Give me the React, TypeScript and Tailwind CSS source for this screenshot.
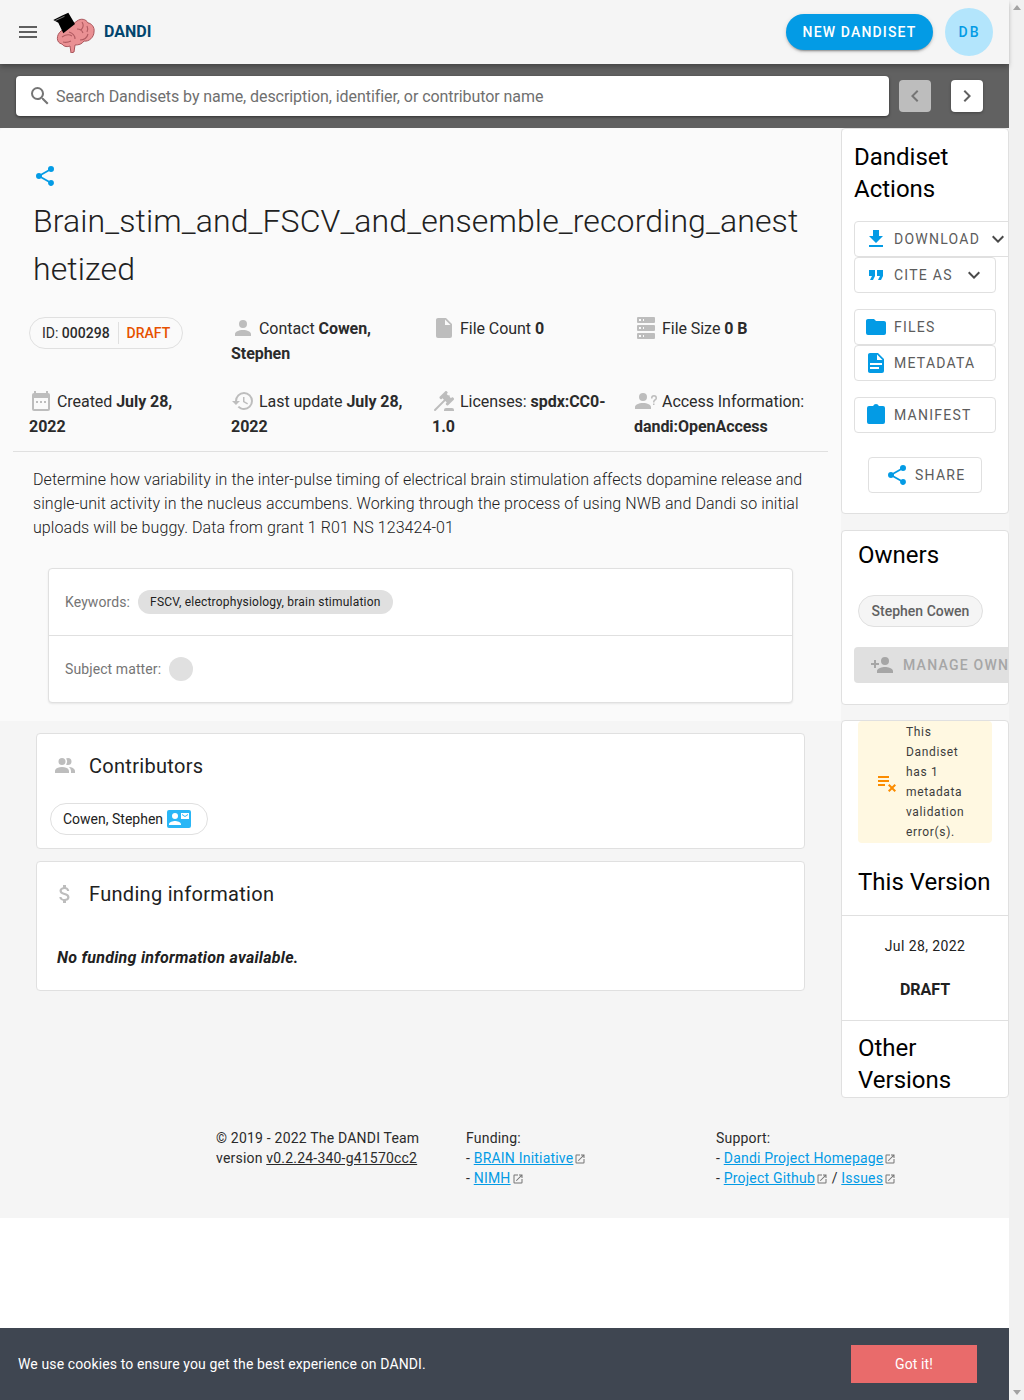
import type { ReactNode } from "react";

const mdi = {
  menu: "M3,6H21V8H3V6M3,11H21V13H3V11M3,16H21V18H3V16Z",
  magnify: "M9.5,3A6.5,6.5 0 0,1 16,9.5C16,11.11 15.41,12.59 14.44,13.73L14.71,14H15.5L20.5,19L19,20.5L14,15.5V14.71L13.73,14.44C12.59,15.41 11.11,16 9.5,16A6.5,6.5 0 0,1 3,9.5A6.5,6.5 0 0,1 9.5,3M9.5,5C7,5 5,7 5,9.5C5,12 7,14 9.5,14C12,14 14,12 14,9.5C14,7 12,5 9.5,5Z",
  share: "M18,16.08C17.24,16.08 16.56,16.38 16.04,16.85L8.91,12.7C8.96,12.47 9,12.24 9,12C9,11.76 8.96,11.53 8.91,11.3L15.96,7.19C16.5,7.69 17.21,8 18,8A3,3 0 0,0 21,5A3,3 0 0,0 18,2A3,3 0 0,0 15,5C15,5.24 15.04,5.47 15.09,5.7L8.04,9.81C7.5,9.31 6.79,9 6,9A3,3 0 0,0 3,12A3,3 0 0,0 6,15C6.79,15 7.5,14.69 8.04,14.19L15.16,18.34C15.11,18.55 15.08,18.77 15.08,19C15.08,20.61 16.39,21.91 18,21.91C19.61,21.91 20.92,20.61 20.92,19A2.92,2.92 0 0,0 18,16.08Z",
  account: "M12,4A4,4 0 0,1 16,8A4,4 0 0,1 12,12A4,4 0 0,1 8,8A4,4 0 0,1 12,4M12,14C16.42,14 20,15.79 20,18V20H4V18C4,15.79 7.58,14 12,14Z",
  file: "M13,9V3.5L18.5,9M6,2C4.89,2 4,2.89 4,4V20A2,2 0 0,0 6,22H18A2,2 0 0,0 20,20V8L14,2H6Z",
  download: "M5,20H19V18H5M19,9H15V3H9V9H5L12,16L19,9Z",
  chevronDown: "M7.41,8.58L12,13.17L16.59,8.58L18,10L12,16L6,10L7.41,8.58Z",
  chevronLeft: "M15.41,16.58L10.83,12L15.41,7.41L14,6L8,12L14,18L15.41,16.58Z",
  chevronRight: "M8.59,16.58L13.17,12L8.59,7.41L10,6L16,12L10,18L8.59,16.58Z",
  quote: "M14,17H17L19,13V7H13V13H16M6,17H9L11,13V7H5V13H8L6,17Z",
  folder: "M10,4H4C2.89,4 2,4.89 2,6V18A2,2 0 0,0 4,20H20A2,2 0 0,0 22,18V8C22,6.89 21.1,6 20,6H12L10,4Z",
  fileDoc: "M13,9H18.5L13,3.5V9M6,2H14L20,8V20A2,2 0 0,1 18,22H6C4.89,22 4,21.1 4,20V4C4,2.89 4.89,2 6,2M15,18V16H6V18H15M18,14V12H6V14H18Z",
  clipboard: "M19,3H14.82C14.4,1.84 13.3,1 12,1C10.7,1 9.6,1.84 9.18,3H5A2,2 0 0,0 3,5V19A2,2 0 0,0 5,21H19A2,2 0 0,0 21,19V5A2,2 0 0,0 19,3Z",
  accountPlus: "M15,14C12.33,14 7,15.33 7,18V20H23V18C23,15.33 17.67,14 15,14M6,10V7H4V10H1V12H4V15H6V12H9V10M15,12A4,4 0 0,0 19,8A4,4 0 0,0 15,4A4,4 0 0,0 11,8A4,4 0 0,0 15,12Z",
  accountMultiple: "M16 17V19H2V17S2 13 9 13 16 17 16 17M12.5 7.5A3.5 3.5 0 1 0 9 11A3.5 3.5 0 0 0 12.5 7.5M15.94 13A5.32 5.32 0 0 1 18 17V19H22V17S22 13.37 15.94 13M15 4A3.39 3.39 0 0 0 13.07 4.59A5 5 0 0 1 13.07 10.41A3.39 3.39 0 0 0 15 11A3.5 3.5 0 0 0 15 4Z",
  dollar: "M11.8 10.9c-2.27-.59-3-1.2-3-2.15 0-1.09 1.01-1.85 2.7-1.85 1.78 0 2.44.85 2.5 2.1h2.21c-.07-1.72-1.12-3.3-3.21-3.81V3h-3v2.16c-1.94.42-3.5 1.68-3.5 3.61 0 2.31 1.91 3.46 4.7 4.13 2.5.6 3 1.48 3 2.41 0 .69-.49 1.79-2.7 1.79-2.06 0-2.87-.92-2.98-2.1h-2.2c.12 2.19 1.76 3.42 3.68 3.83V21h3v-2.15c1.95-.37 3.5-1.5 3.5-3.55 0-2.84-2.43-3.81-4.7-4.4z",
  calendar: "M5,2H7V4H17V2H19V4A2,2 0 0,1 21,6V20A2,2 0 0,1 19,22H5A2,2 0 0,1 3,20V6A2,2 0 0,1 5,4V2M5,9V20H19V9H5M7,12H9V14H7V12M11,12H13V14H11V12M15,12H17V14H15V12Z",
  history: "M13.5,8H12V13L16.28,15.54L17,14.33L13.5,12.25V8M13,3A9,9 0 0,0 4,12H1L4.96,16.03L9,12H6A7,7 0 0,1 13,5A7,7 0 0,1 20,12A7,7 0 0,1 13,19C11.07,19 9.32,18.21 8.06,16.94L6.64,18.36C8.27,20 10.5,21 13,21A9,9 0 0,0 22,12A9,9 0 0,0 13,3",
  gavel: "M2.3,20.28L11.9,10.68L10.5,9.26L9.78,9.97C9.39,10.36 8.76,10.36 8.37,9.97L7.66,9.26C7.27,8.87 7.27,8.24 7.66,7.85L13.32,2.19C13.71,1.8 14.34,1.8 14.73,2.19L15.44,2.9C15.83,3.29 15.83,3.92 15.44,4.31L14.73,5L16.15,6.43C16.54,6.04 17.17,6.04 17.56,6.43C17.95,6.82 17.95,7.46 17.56,7.85L18.97,9.26L19.68,8.55C20.07,8.16 20.71,8.16 21.1,8.55L21.8,9.26C22.19,9.65 22.19,10.29 21.8,10.68L16.15,16.33C15.76,16.72 15.12,16.72 14.73,16.33L14.03,15.63C13.63,15.24 13.63,14.6 14.03,14.21L14.73,13.5L13.32,12.09L3.71,21.7C3.32,22.09 2.69,22.09 2.3,21.7C1.91,21.31 1.91,20.67 2.3,20.28M20,19A2,2 0 0,1 22,21V22H12V21A2,2 0 0,1 14,19H20Z",
  accountQuestion: "M13,8A4,4 0 0,1 9,12A4,4 0 0,1 5,8A4,4 0 0,1 9,4A4,4 0 0,1 13,8M17,18V20H1V18C1,15.79 4.58,14 9,14C13.42,14 17,15.79 17,18M20.5,14.5V16H19V14.5H20.5M18.5,9.5H17V9A3,3 0 0,1 20,6A3,3 0 0,1 23,9C23,9.97 22.5,10.88 21.71,11.41L21.41,11.6C20.84,12 20.5,12.61 20.5,13.3V13.5H19V13.3C19,12.11 19.6,11 20.59,10.35L20.88,10.16C21.27,9.9 21.5,9.47 21.5,9A1.5,1.5 0 0,0 20,7.5A1.5,1.5 0 0,0 18.5,9V9.5Z",
  server: "M4,1H20A1,1 0 0,1 21,2V6A1,1 0 0,1 20,7H4A1,1 0 0,1 3,6V2A1,1 0 0,1 4,1M4,9H20A1,1 0 0,1 21,10V14A1,1 0 0,1 20,15H4A1,1 0 0,1 3,14V10A1,1 0 0,1 4,9M4,17H20A1,1 0 0,1 21,18V22A1,1 0 0,1 20,23H4A1,1 0 0,1 3,22V18A1,1 0 0,1 4,17M9,5H10V3H9V5M9,13H10V11H9V13M9,21H10V19H9V21M5,3V5H7V3H5M5,11V13H7V11H5M5,19V21H7V19H5Z",
  playlistRemove: "M14,10H3V12H14V10M14,6H3V8H14V6M3,16H10V14H3V16M14.4,22L17,19.4L19.6,22L21,20.6L18.4,18L21,15.4L19.6,14L17,16.6L14.4,14L13,15.4L15.6,18L13,20.6L14.4,22Z",
  cardMail: "M21,8V7L18,9L15,7V8L18,10M22,3H2A2,2 0 0,0 0,5V19A2,2 0 0,0 2,21H22A2,2 0 0,0 24,19V5A2,2 0 0,0 22,3M8,6A3,3 0 0,1 11,9A3,3 0 0,1 8,12A3,3 0 0,1 5,9A3,3 0 0,1 8,6M14,18H2V17C2,15 6,13.9 8,13.9C10,13.9 14,15 14,17M22,12H14V6H22Z",
  openNew: "M14,3V5H17.59L7.76,14.83L9.17,16.24L19,6.41V10H21V3M19,19H5V5H12V3H5C3.89,3 3,3.9 3,5V19A2,2 0 0,0 5,21H19A2,2 0 0,0 21,19V12H19V19Z",
};

function Icon({ d, className }: { d: string; className: string }) {
  return (
    <svg viewBox="0 0 24 24" fill="currentColor" className={`shrink-0 ${className}`}>
      <path d={d} />
    </svg>
  );
}

function Logo() {
  return (
    <svg viewBox="0 0 42 42" className="w-[42px] h-[42px] shrink-0">
      <path d="M8 20C3 24 3 32 9 33C11 36 15 36 17 35L18 42L21 41L22 34C26 34 29 33 31 30C36 31 41 26 41 21C42 16 38 12 35 12C33 8 28 7 24 10L20 13Z" fill="#ea9093" stroke="#a9565c" strokeWidth="1" />
      <path d="M9 26c3-2 7-3 10-1M16 21c3 1 6 3 6 7M29 11c2 3 1 6-1 8M24 18c3 0 5 1 6 4M10 31c3 1 6 0 8-1M27 29c4 0 7-2 8-6M34 15c1 2 1 4 0 6" fill="none" stroke="#b05a60" strokeWidth="1.1" />
      <path d="M0.300 9L8.700 4.700L15.300 1.700L22 13L10.300 22.300L5.300 11.700Z" fill="#000" />
      <path d="M2.500 9.500L9 6.500L11.500 5.300" fill="none" stroke="#b5b5b5" strokeWidth="0.7" />
    </svg>
  );
}

function ActionButton({ icon, label, iconClass, chevronClass, className }: { icon: string; label: string; iconClass: string; chevronClass?: string; className: string }) {
  return (
    <div className={`h-9 shrink-0 flex items-center bg-white border border-[#e0e0e0] rounded-[4px] text-[14px] tracking-[1.25px] text-[#5c5c5c] ${className}`}>
      <Icon d={icon} className={`w-6 h-6 mr-[6px] text-[#039be5] ${iconClass}`} />
      <span className="whitespace-nowrap">{label}</span>
      {chevronClass && <Icon d={mdi.chevronDown} className={`w-6 h-6 text-[#4a4a4a] ${chevronClass}`} />}
    </div>
  );
}

function Stat({ icon, children }: { icon: string; children: ReactNode }) {
  return (
    <div className="text-[16px] leading-[25px] tracking-[-0.05px] text-[#2b2b2b] pr-5">
      <Icon d={icon} className="inline-block w-6 h-6 text-[#bdbdbd] mr-1 align-[-6px]" />
      {children}
    </div>
  );
}

function ExtLink({ children }: { children: ReactNode }) {
  return (
    <>
      <span className="text-[#039be5] underline">{children}</span>
      <Icon d={mdi.openNew} className="inline-block w-3 h-3 text-[#757575] ml-px align-[-2px]" />
    </>
  );
}

export default function App() {
  return (
    <div className="relative flex w-[1024px] h-[1400px] overflow-hidden bg-white font-['Roboto',sans-serif]">
      <div className="w-[1009px] shrink-0 flex flex-col">
        {/* app bar */}
        <header className="h-16 shrink-0 bg-[#f5f5f5] flex items-center pl-4 pr-4 z-10 shadow-[0_2px_4px_-1px_rgba(0,0,0,0.2),0_4px_5px_0_rgba(0,0,0,0.14)]">
          <Icon d={mdi.menu} className="w-6 h-6 text-[#5f5f5f]" />
          <div className="ml-[13px]"><Logo /></div>
          <span className="ml-[9px] text-[16px] font-bold text-[#02456e]">DANDI</span>
          <div className="ml-auto flex items-center">
            <div className="h-9 w-[147px] rounded-full bg-[#039be5] text-white text-[14px] font-medium tracking-[1.15px] flex items-center justify-center shadow-[0_3px_1px_-2px_rgba(0,0,0,0.2),0_2px_2px_0_rgba(0,0,0,0.14),0_1px_5px_0_rgba(0,0,0,0.12)]">NEW DANDISET</div>
            <div className="ml-3 w-12 h-12 rounded-full bg-[#b3e5fc] text-[#039be5] text-[14px] font-medium tracking-[2px] flex items-center justify-center pl-px">DB</div>
          </div>
        </header>

        {/* search bar */}
        <div className="h-16 shrink-0 bg-[#616161] flex items-start pl-4 pt-3">
          <div className="w-[873px] h-10 bg-white rounded-[4px] flex items-center pl-3 shadow-[0_1px_3px_rgba(0,0,0,0.5)]">
            <Icon d={mdi.magnify} className="w-6 h-6 text-[#757575]" />
            <span className="ml-[4px] pt-px text-[16px] tracking-[-0.07px] text-[#6f6f6f]">Search Dandisets by name, description, identifier, or contributor name</span>
          </div>
          <div className="ml-[10px] mt-1 w-8 h-8 rounded-[4px] bg-[#bdbdbd] flex items-center justify-center">
            <Icon d={mdi.chevronLeft} className="w-6 h-6 text-[#757575]" />
          </div>
          <div className="ml-5 mt-1 w-8 h-8 rounded-[4px] bg-white flex items-center justify-center shadow-[0_1px_3px_rgba(0,0,0,0.3)]">
            <Icon d={mdi.chevronRight} className="w-6 h-6 text-[#616161]" />
          </div>
        </div>

        <div className="flex h-[970px] shrink-0 bg-[#f5f5f5]">
          {/* left column */}
          <div className="w-[841px] shrink-0">
            <div className="h-[593px] bg-[#fafafa] rounded-t-[4px] flex flex-col">
              <div className="pl-[33px] pt-[36px]">
                <Icon d={mdi.share} className="w-6 h-6 text-[#039be5]" />
              </div>
              <h1 className="ml-[33px] mt-[9px] w-[780px] text-[32px] leading-[48px] font-light tracking-[0.11px] text-[#212121] break-all">Brain_stim_and_FSCV_and_ensemble_recording_anesthetized</h1>

              <div className="ml-[29px] mt-[23px] grid grid-cols-[202px_201px_202px_195px] grid-rows-[73px_auto]">
                <div>
                  <div className="mt-px w-[154px] h-8 rounded-full border border-[#e0e0e0] flex items-center pl-3 text-[14px] text-[#2b2b2b] bg-[#fafafa]">
                    <span>ID:&nbsp;</span><b className="font-medium">000298</b>
                    <span className="ml-2 mr-2 h-[22px] w-px bg-[#e0e0e0]" />
                    <b className="font-medium text-[#e65100]">DRAFT</b>
                  </div>
                </div>
                <Stat icon={mdi.account}>Contact <b className="font-bold">Cowen, Stephen</b></Stat>
                <Stat icon={mdi.file}>File Count <b className="font-bold">0</b></Stat>
                <Stat icon={mdi.server}>File Size <b className="font-bold">0 B</b></Stat>
                <Stat icon={mdi.calendar}>Created <b className="font-bold">July 28, 2022</b></Stat>
                <Stat icon={mdi.history}>Last update <b className="font-bold">July 28, 2022</b></Stat>
                <Stat icon={mdi.gavel}>Licenses: <b className="font-bold">spdx:CC0-1.0</b></Stat>
                <Stat icon={mdi.accountQuestion}>Access Information: <b className="font-bold">dandi:OpenAccess</b></Stat>
              </div>

              <div className="ml-[13px] mt-3 w-[815px] h-px bg-[#e0e0e0]" />

              <p className="ml-[33px] mt-4 w-[776px] text-[16px] leading-6 font-light tracking-[0.07px] text-[#212121]">Determine how variability in the inter-pulse timing of electrical brain stimulation affects dopamine release and single-unit activity in the nucleus accumbens. Working through the process of using NWB and Dandi so initial uploads will be buggy. Data from grant 1 R01 NS 123424-01</p>

              <div className="ml-[48px] mt-[28px] w-[745px] h-[135px] bg-white border border-[#e0e0e0] rounded-[4px] shadow-[0_1px_2px_rgba(0,0,0,0.08)] flex flex-col text-[14px] tracking-[0.1px] text-[#757575]">
                <div className="h-[67px] flex items-center pl-4 border-b border-[#e0e0e0]">
                  <span>Keywords:</span>
                  <span className="ml-2 h-6 rounded-full bg-[#e0e0e0] px-3 flex items-center text-[12px] tracking-[0.22px] text-[#212121]">FSCV, electrophysiology, brain stimulation</span>
                </div>
                <div className="flex-1 flex items-center pl-4">
                  <span>Subject matter:</span>
                  <span className="ml-2 w-6 h-6 rounded-full bg-[#e0e0e0]" />
                </div>
              </div>
            </div>

            <div className="ml-9 mt-3 w-[769px] h-[116px] bg-white border border-[#e0e0e0] rounded-[4px]">
              <div className="flex items-center pl-[16px] pt-[20px]">
                <Icon d={mdi.accountMultiple} className="w-6 h-6 text-[#bdbdbd]" />
                <span className="ml-3 text-[20px] leading-6 tracking-[0.3px] text-[#212121]">Contributors</span>
              </div>
              <div className="ml-[13px] mt-[25px] w-[158px] h-8 rounded-full border border-[#e0e0e0] flex items-center pl-3 text-[14px] text-[#212121]">
                Cowen, Stephen
                <Icon d={mdi.cardMail} className="w-6 h-6 ml-1 text-[#29b6f6]" />
              </div>
            </div>

            <div className="ml-9 mt-3 w-[769px] h-[130px] bg-white border border-[#e0e0e0] rounded-[4px]">
              <div className="flex items-center pl-[16px] pt-[20px]">
                <Icon d={mdi.dollar} className="w-6 h-6 text-[#bdbdbd]" />
                <span className="ml-3 text-[20px] leading-6 tracking-[0.3px] text-[#212121]">Funding information</span>
              </div>
              <p className="ml-5 mt-10 text-[16px] leading-6 font-bold italic tracking-[0.27px] text-[#212121]">No funding information available.</p>
            </div>
          </div>

          {/* right column */}
          <div className="w-[168px] shrink-0">
            <div className="h-[386px] bg-white border border-[#e0e0e0] rounded-[4px] overflow-hidden pt-3 pl-3 flex flex-col">
              <h2 className="text-[24px] leading-8 text-black">Dandiset Actions</h2>
              <div className="mt-4 flex flex-col">
                <ActionButton icon={mdi.download} label="DOWNLOAD" iconClass="ml-[9px]" chevronClass="ml-[6px]" className="w-[160px]" />
                <ActionButton icon={mdi.quote} label="CITE AS" iconClass="ml-[9px]" chevronClass="ml-[9px]" className="w-[142px]" />
                <div className="h-4 shrink-0" />
                <ActionButton icon={mdi.folder} label="FILES" iconClass="ml-[9px]" className="w-[142px]" />
                <ActionButton icon={mdi.fileDoc} label="METADATA" iconClass="ml-[9px]" className="w-[142px]" />
                <div className="h-4 shrink-0" />
                <ActionButton icon={mdi.clipboard} label="MANIFEST" iconClass="ml-[9px]" className="w-[142px]" />
                <ActionButton icon={mdi.share} label="SHARE" iconClass="ml-4" className="w-[114px] ml-[14px] mt-6" />
              </div>
            </div>

            <div className="mt-4 h-[175px] bg-white border border-[#e0e0e0] rounded-[4px] overflow-hidden pl-3 pt-2 flex flex-col">
              <h2 className="ml-1 text-[24px] leading-8 text-black">Owners</h2>
              <div className="ml-1 mt-6 w-[125px] h-8 rounded-full bg-[#f5f5f5] border border-[#e0e0e0] flex items-center justify-center text-[14px] font-medium text-[#616161]">Stephen Cowen</div>
              <div className="mt-5 w-[190px] h-9 rounded-[4px] bg-[#e0e0e0] flex items-center pl-4 text-[14px] font-medium tracking-[1.25px] text-[#a6a6a6] whitespace-nowrap">
                <Icon d={mdi.accountPlus} className="w-6 h-6 text-[#a6a6a6] mr-[9px]" />
                MANAGE OWNERS
              </div>
            </div>

            <div className="mt-[15px] h-[378px] bg-white border border-[#e0e0e0] rounded-[4px] overflow-hidden flex flex-col">
              <div className="ml-4 w-[134px] h-[122px] shrink-0 bg-[#fff8e1] rounded-[4px] flex items-center pl-[17px]">
                <Icon d={mdi.playlistRemove} className="w-6 h-6 text-[#fb8c00]" />
                <span className="ml-[7px] w-[70px] text-[12px] leading-5 tracking-[0.65px] text-[#3c3c3c]">This Dandiset has 1 metadata validation error(s).</span>
              </div>
              <h2 className="ml-4 mt-[23px] text-[24px] leading-8 text-black whitespace-nowrap">This Version</h2>
              <div className="mt-[17px] h-px shrink-0 bg-[#e0e0e0]" />
              <div className="mt-[20px] text-center text-[14px] leading-5 tracking-[0.4px] text-[#212121]">Jul 28, 2022</div>
              <div className="mt-6 text-center text-[16px] leading-5 font-bold text-[#212121]">DRAFT</div>
              <div className="mt-5 h-px shrink-0 bg-[#e0e0e0]" />
              <h2 className="ml-4 mt-[11px] text-[24px] leading-8 text-black">Other Versions</h2>
            </div>
          </div>
        </div>

        {/* footer */}
        <footer className="h-[120px] shrink-0 bg-[#f5f5f5] pt-[30px] pl-[216px] grid grid-cols-[250px_250px_250px] content-start text-[14px] leading-5 tracking-[0.2px] text-[#2b2b2b]">
          <div>
            <div>© 2019 - 2022 The DANDI Team</div>
            <div>version <span className="underline">v0.2.24-340-g41570cc2</span></div>
          </div>
          <div>
            <div>Funding:</div>
            <div>- <ExtLink>BRAIN Initiative</ExtLink></div>
            <div>- <ExtLink>NIMH</ExtLink></div>
          </div>
          <div>
            <div>Support:</div>
            <div>- <ExtLink>Dandi Project Homepage</ExtLink></div>
            <div>- <ExtLink>Project Github</ExtLink> / <ExtLink>Issues</ExtLink></div>
          </div>
        </footer>
      </div>

      {/* scrollbar */}
      <div className="w-[15px] shrink-0 bg-[#f1f1f1] relative flex flex-col items-center justify-between py-[5px]">
        <span className="w-0 h-0 border-x-[4px] border-x-transparent border-b-[5px] border-b-[#a3a3a3]" />
        <span className="w-0 h-0 border-x-[4px] border-x-transparent border-t-[5px] border-t-[#a3a3a3]" />
      </div>

      {/* cookie banner */}
      <div className="absolute left-0 bottom-0 w-[1009px] h-[72px] bg-[#3f4651] flex items-center pl-[18px] text-[14px] tracking-[0.12px] text-white">
        We use cookies to ensure you get the best experience on DANDI.
        <div className="absolute left-[851px] top-[17px] w-[126px] h-[38px] bg-[#e96b6b] flex items-center justify-center">Got it!</div>
      </div>
    </div>
  );
}
